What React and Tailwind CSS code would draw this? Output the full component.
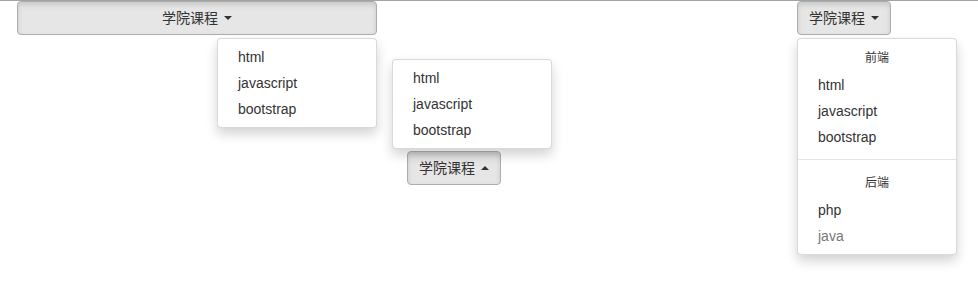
import React from "react";

const font = { fontFamily: '"Liberation Sans", "Noto Sans CJK SC", Arial, sans-serif' };

function Caret({ up }) {
  return (
    <span
      className={
        "ml-[6px] inline-block h-0 w-0 shrink-0 border-x-[4px] border-x-transparent align-middle " +
        (up ? "border-b-[4px] border-b-[#333]" : "border-t-[4px] border-t-[#333]")
      }
    />
  );
}

function Btn({ up, className = "" }) {
  return (
    <button
      className={
        "flex h-[34px] items-center justify-center whitespace-nowrap rounded-[4px] border border-[#adadad] bg-[#e6e6e6] px-[8px] text-[14px] text-[#333] shadow-[inset_0_3px_5px_rgba(0,0,0,0.125)] " +
        className
      }
    >
      <span className="shrink-0">学院课程</span>
      <Caret up={up} />
    </button>
  );
}

function Item({ children, disabled }) {
  return (
    <li className={"h-[26px] px-[20px] text-[14px] leading-[26px] " + (disabled ? "text-[#777]" : "text-[#333]")}>
      {children}
    </li>
  );
}

function Header({ children }) {
  return <li className="flex h-[28px] items-center justify-center text-[12px] text-[#333]">{children}</li>;
}

const menuCls =
  "absolute z-10 w-[160px] rounded-[4px] border border-[rgba(0,0,0,0.15)] bg-white py-[5px] shadow-[0_6px_12px_rgba(0,0,0,0.175)]";

export default function App() {
  return (
    <div className="h-[286px] w-full border-t border-[#a3a3a3] bg-white" style={font}>
      <div className="flex items-start">
        <div className="relative ml-[17px] w-[360px]">
          <Btn className="w-full" />
          <ul className={menuCls + " right-0 top-[37px]"}>
            <Item>html</Item>
            <Item>javascript</Item>
            <Item>bootstrap</Item>
          </ul>
        </div>

        <div className="relative ml-[30px] mt-[150px]">
          <Btn up className="w-[94px]" />
          <ul className={menuCls + " bottom-full left-[-15px] mb-[2px]"}>
            <Item>html</Item>
            <Item>javascript</Item>
            <Item>bootstrap</Item>
          </ul>
        </div>

        <div className="relative ml-[296px]">
          <Btn className="w-[94px]" />
          <ul className={menuCls + " left-0 top-[37px]"}>
            <Header>前端</Header>
            <Item>html</Item>
            <Item>javascript</Item>
            <Item>bootstrap</Item>
            <li className="my-[9px] h-px bg-[#e5e5e5]" />
            <Header>后端</Header>
            <Item>php</Item>
            <Item disabled>java</Item>
          </ul>
        </div>
      </div>
    </div>
  );
}
